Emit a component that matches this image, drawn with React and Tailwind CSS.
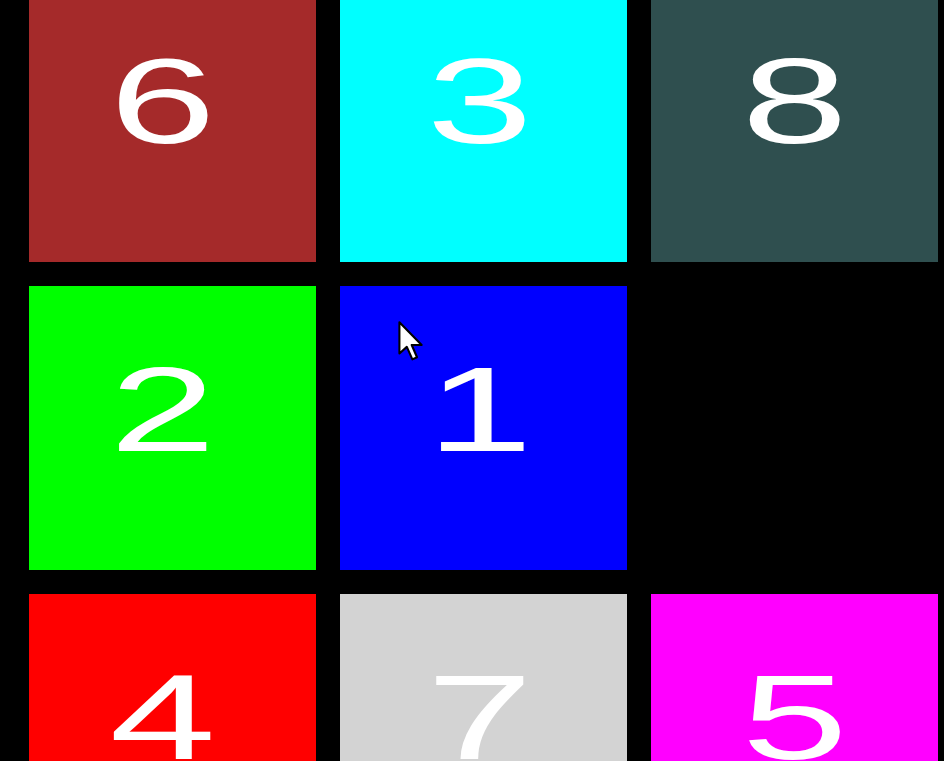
import React from 'react';

const tiles = [
  { n: '6', bg: 'bg-[#a52a2a]' },
  { n: '3', bg: 'bg-[#00ffff]' },
  { n: '8', bg: 'bg-[#2f4f4f]' },
  { n: '2', bg: 'bg-[#00ff00]' },
  { n: '1', bg: 'bg-[#0000ff]' },
  { n: null, bg: 'bg-black' },
  { n: '4', bg: 'bg-[#ff0000]' },
  { n: '7', bg: 'bg-[#d3d3d3]' },
  { n: '5', bg: 'bg-[#ff00ff]' },
];

// the digits in the shot sit a little left of centre in the first two columns
const nudge = ['pr-[20px]', 'pr-[8px]', 'pr-0'];

const Cursor = () => (
  <svg
    className="absolute left-[397px] top-[320px]"
    width="28"
    height="44"
    viewBox="0 0 12 19"
  >
    <path
      d="M1 1 L1 14.5 L4.2 11.6 L6.6 17 L8.6 16.1 L6.3 10.8 L10.6 10.8 Z"
      fill="white"
      stroke="black"
      strokeWidth="0.9"
      strokeLinejoin="round"
    />
  </svg>
);

const App = () => {
  return (
    <div className="relative w-full h-[761px] bg-black overflow-hidden">
      <div className="grid grid-cols-[287px_287px_287px] auto-rows-[284px] gap-[24px] pl-[29px] -mt-[22px]">
        {tiles.map((t, i) => (
          <div
            key={i}
            className={`${t.bg} ${nudge[i % 3]} flex items-center justify-center pb-[37px]`}
          >
            {t.n && (
              <span
                className="text-white text-[121px] leading-none scale-x-[1.58] select-none"
                style={{ fontFamily: '"Liberation Sans", Arial, sans-serif' }}
              >
                {t.n}
              </span>
            )}
          </div>
        ))}
      </div>
      <Cursor />
    </div>
  );
};

export default App;
